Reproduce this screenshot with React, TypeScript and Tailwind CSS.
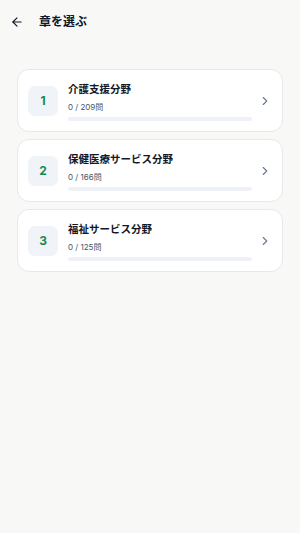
import { ArrowLeft, ChevronRight } from "lucide-react";

interface Chapter {
  id: number;
  title: string;
  done: number;
  total: number;
}

const CHAPTERS: Chapter[] = [
  { id: 1, title: "介護支援分野", done: 0, total: 209 },
  { id: 2, title: "保健医療サービス分野", done: 0, total: 166 },
  { id: 3, title: "福祉サービス分野", done: 0, total: 125 },
];

function ChapterCard({ chapter }: { chapter: Chapter }) {
  const pct = chapter.total > 0 ? (chapter.done / chapter.total) * 100 : 0;

  return (
    <button className="w-full h-[63px] bg-white rounded-[12px] border border-[#e6e8ee] flex items-center px-[10px] text-left">
      {/* Number badge */}
      <div className="w-[30px] h-[30px] shrink-0 rounded-[7px] bg-[#f0f3f7] flex items-center justify-center">
        <span className="text-[12px] font-bold text-[#178a4e]">{chapter.id}</span>
      </div>

      {/* Info */}
      <div className="flex-1 min-w-0 ml-[10px] mr-[6px] pt-[2px] flex flex-col">
        <h3 className="text-[10.5px] leading-[14px] font-semibold text-[#111827] truncate">
          {chapter.title}
        </h3>
        <p className="mt-[4px] text-[8px] leading-[12px] text-[#4b5563]">
          {chapter.done} / {chapter.total}問
        </p>
        <div className="mt-[4px] h-[4px] rounded-full bg-[#eef1f6] overflow-hidden">
          <div className="h-full bg-[#178a4e]" style={{ width: `${pct}%` }} />
        </div>
      </div>

      <ChevronRight size={14} strokeWidth={2} className="shrink-0 text-[#6b7a90]" />
    </button>
  );
}

export default function App() {
  return (
    <div
      className="w-[300px] h-[533px] bg-[#f8f8f7] flex flex-col"
      style={{ fontFamily: '"Inter", "Noto Sans CJK JP", sans-serif' }}
    >
      {/* Header */}
      <header className="h-[43px] flex items-center pl-[10px]">
        <ArrowLeft size={14} strokeWidth={2} className="text-[#111827]" />
        <h1 className="ml-[15px] text-[12px] font-bold text-[#111827]">章を選ぶ</h1>
      </header>

      {/* Chapters */}
      <main className="pt-[26px] px-[17px] flex flex-col gap-[7px]">
        {CHAPTERS.map((c) => (
          <ChapterCard key={c.id} chapter={c} />
        ))}
      </main>
    </div>
  );
}
